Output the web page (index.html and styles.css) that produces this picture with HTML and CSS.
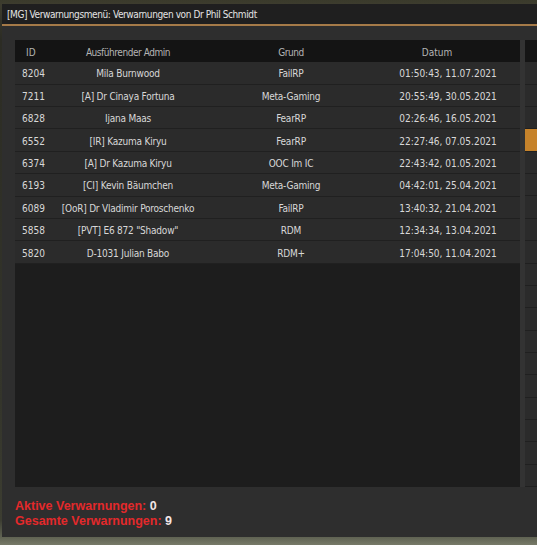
FILE: index.html
```html
<!DOCTYPE html>
<html lang="de">
<head>
<meta charset="utf-8">
<title>Verwarnungsmenü</title>
<link rel="stylesheet" href="styles.css">
</head>
<body>
<div class="window">
  <div class="titlebar">[MG] Verwarnungsmenü: Verwarnungen von Dr Phil Schmidt</div>
  <div class="content">
    <div class="panels">
      <div class="table">
        <div class="row head">
          <div class="c id">ID</div>
          <div class="c">Ausführender Admin</div>
          <div class="c">Grund</div>
          <div class="c dat">Datum</div>
        </div>
        <div class="row"><div class="c id">8204</div><div class="c">Mila Burnwood</div><div class="c">FailRP</div><div class="c dat">01:50:43, 11.07.2021</div></div>
        <div class="row"><div class="c id">7211</div><div class="c">[A] Dr Cinaya Fortuna</div><div class="c">Meta-Gaming</div><div class="c dat">20:55:49, 30.05.2021</div></div>
        <div class="row"><div class="c id">6828</div><div class="c">Ijana Maas</div><div class="c">FearRP</div><div class="c dat">02:26:46, 16.05.2021</div></div>
        <div class="row"><div class="c id">6552</div><div class="c">[IR] Kazuma Kiryu</div><div class="c">FearRP</div><div class="c dat">22:27:46, 07.05.2021</div></div>
        <div class="row"><div class="c id">6374</div><div class="c">[A] Dr Kazuma Kiryu</div><div class="c">OOC Im IC</div><div class="c dat">22:43:42, 01.05.2021</div></div>
        <div class="row"><div class="c id">6193</div><div class="c">[CI] Kevin Bäumchen</div><div class="c">Meta-Gaming</div><div class="c dat">04:42:01, 25.04.2021</div></div>
        <div class="row"><div class="c id">6089</div><div class="c">[OoR] Dr Vladimir Poroschenko</div><div class="c">FailRP</div><div class="c dat">13:40:32, 21.04.2021</div></div>
        <div class="row"><div class="c id">5858</div><div class="c">[PVT] E6 872 "Shadow"</div><div class="c">RDM</div><div class="c dat">12:34:34, 13.04.2021</div></div>
        <div class="row"><div class="c id">5820</div><div class="c">D-1031 Julian Babo</div><div class="c">RDM+</div><div class="c dat">17:04:50, 11.04.2021</div></div>
      </div>
      <div class="gutter"></div>
      <div class="side">
        <div class="side-head"></div>
        <div class="side-row"></div>
        <div class="side-row"></div>
        <div class="side-row"></div>
        <div class="side-row active"></div>
        <div class="side-row"></div>
        <div class="side-row"></div>
        <div class="side-row"></div>
        <div class="side-row"></div>
        <div class="side-row"></div>
        <div class="side-row"></div>
        <div class="side-row"></div>
        <div class="side-row"></div>
        <div class="side-row"></div>
        <div class="side-row"></div>
        <div class="side-row"></div>
        <div class="side-row"></div>
        <div class="side-row"></div>
        <div class="side-row"></div>
        <div class="side-row"></div>
      </div>
    </div>
    <div class="stats">
      <div class="stat"><span class="lbl">Aktive Verwarnungen:</span> <span class="val">0</span></div>
      <div class="stat"><span class="lbl">Gesamte Verwarnungen:</span> <span class="val">9</span></div>
    </div>
  </div>
</div>
</body>
</html>
```
FILE: styles.css
```css
html, body {
  margin: 0;
  padding: 0;
}
body {
  width: 537px;
  height: 545px;
  overflow: hidden;
  background:
    linear-gradient(to bottom, #3a3a2b 0px, #3d3c2e 4px, #2c2c24 40px, #34352b 400px, #3c3d31 520px, #5f6252 537px, #777a68 545px);
  font-family: "DejaVu Sans Condensed", "DejaVu Sans", sans-serif;
  font-stretch: condensed;
}
.window {
  margin: 4px 0 0 2px;
  width: 560px;
  height: 533px;
  display: flex;
  flex-direction: column;
  background: #2e2e2e;
}
.titlebar {
  height: 19px;
  line-height: 19px;
  padding: 1px 0 0 5px;
  background: #1f1f1f;
  border-bottom: 2px solid #a57a48;
  color: #e4e4e4;
  font-size: 10px;
  letter-spacing: -0.4px;
}
.content {
  flex: 1;
  display: flex;
  flex-direction: column;
  padding: 14px 0 0 13px;
}
.panels {
  display: flex;
  height: 447px;
}
.table {
  width: 505px;
  background: #1d1d1d;
  display: flex;
  flex-direction: column;
}
.row {
  display: grid;
  grid-template-columns: 35px 156px 170px 144px;
  height: 19.4px;
  padding-top: 2px;
  border-bottom: 1px solid #202020;
  background: #2b2b2b;
  color: #d8d8d8;
  font-size: 10px;
  align-items: center;
}
.row.head {
  height: 20.3px;
  border-bottom: 0;
  background: #141414;
  color: #b4b4b4;
}
.c {
  text-align: center;
  white-space: nowrap;
  letter-spacing: -0.22px;
}
.head .c {
  letter-spacing: -0.45px;
}
.c.dat {
  letter-spacing: 0;
}
.c.id {
  text-align: left;
  padding-left: 7px;
  letter-spacing: 0;
}
.head .c.id {
  padding-left: 11px;
}
.head .c.dat {
  padding-right: 22px;
}
.gutter {
  width: 5px;
  background: #333333;
}
.side {
  width: 40px;
  display: flex;
  flex-direction: column;
  background: #2b2b2b;
}
.side-head {
  height: 22.3px;
  background: #151515;
}
.side-row {
  height: 21.4px;
  border-bottom: 1px solid #202020;
  background: #2b2b2b;
}
.side-row.active {
  background: #c6832b;
}
.stats {
  padding-top: 12px;
  font-family: "Liberation Sans", Arial, sans-serif;
  font-weight: bold;
  font-size: 12.5px;
  line-height: 15px;
}
.lbl {
  color: #e3292b;
}
.val {
  color: #f2e6e6;
}
```
